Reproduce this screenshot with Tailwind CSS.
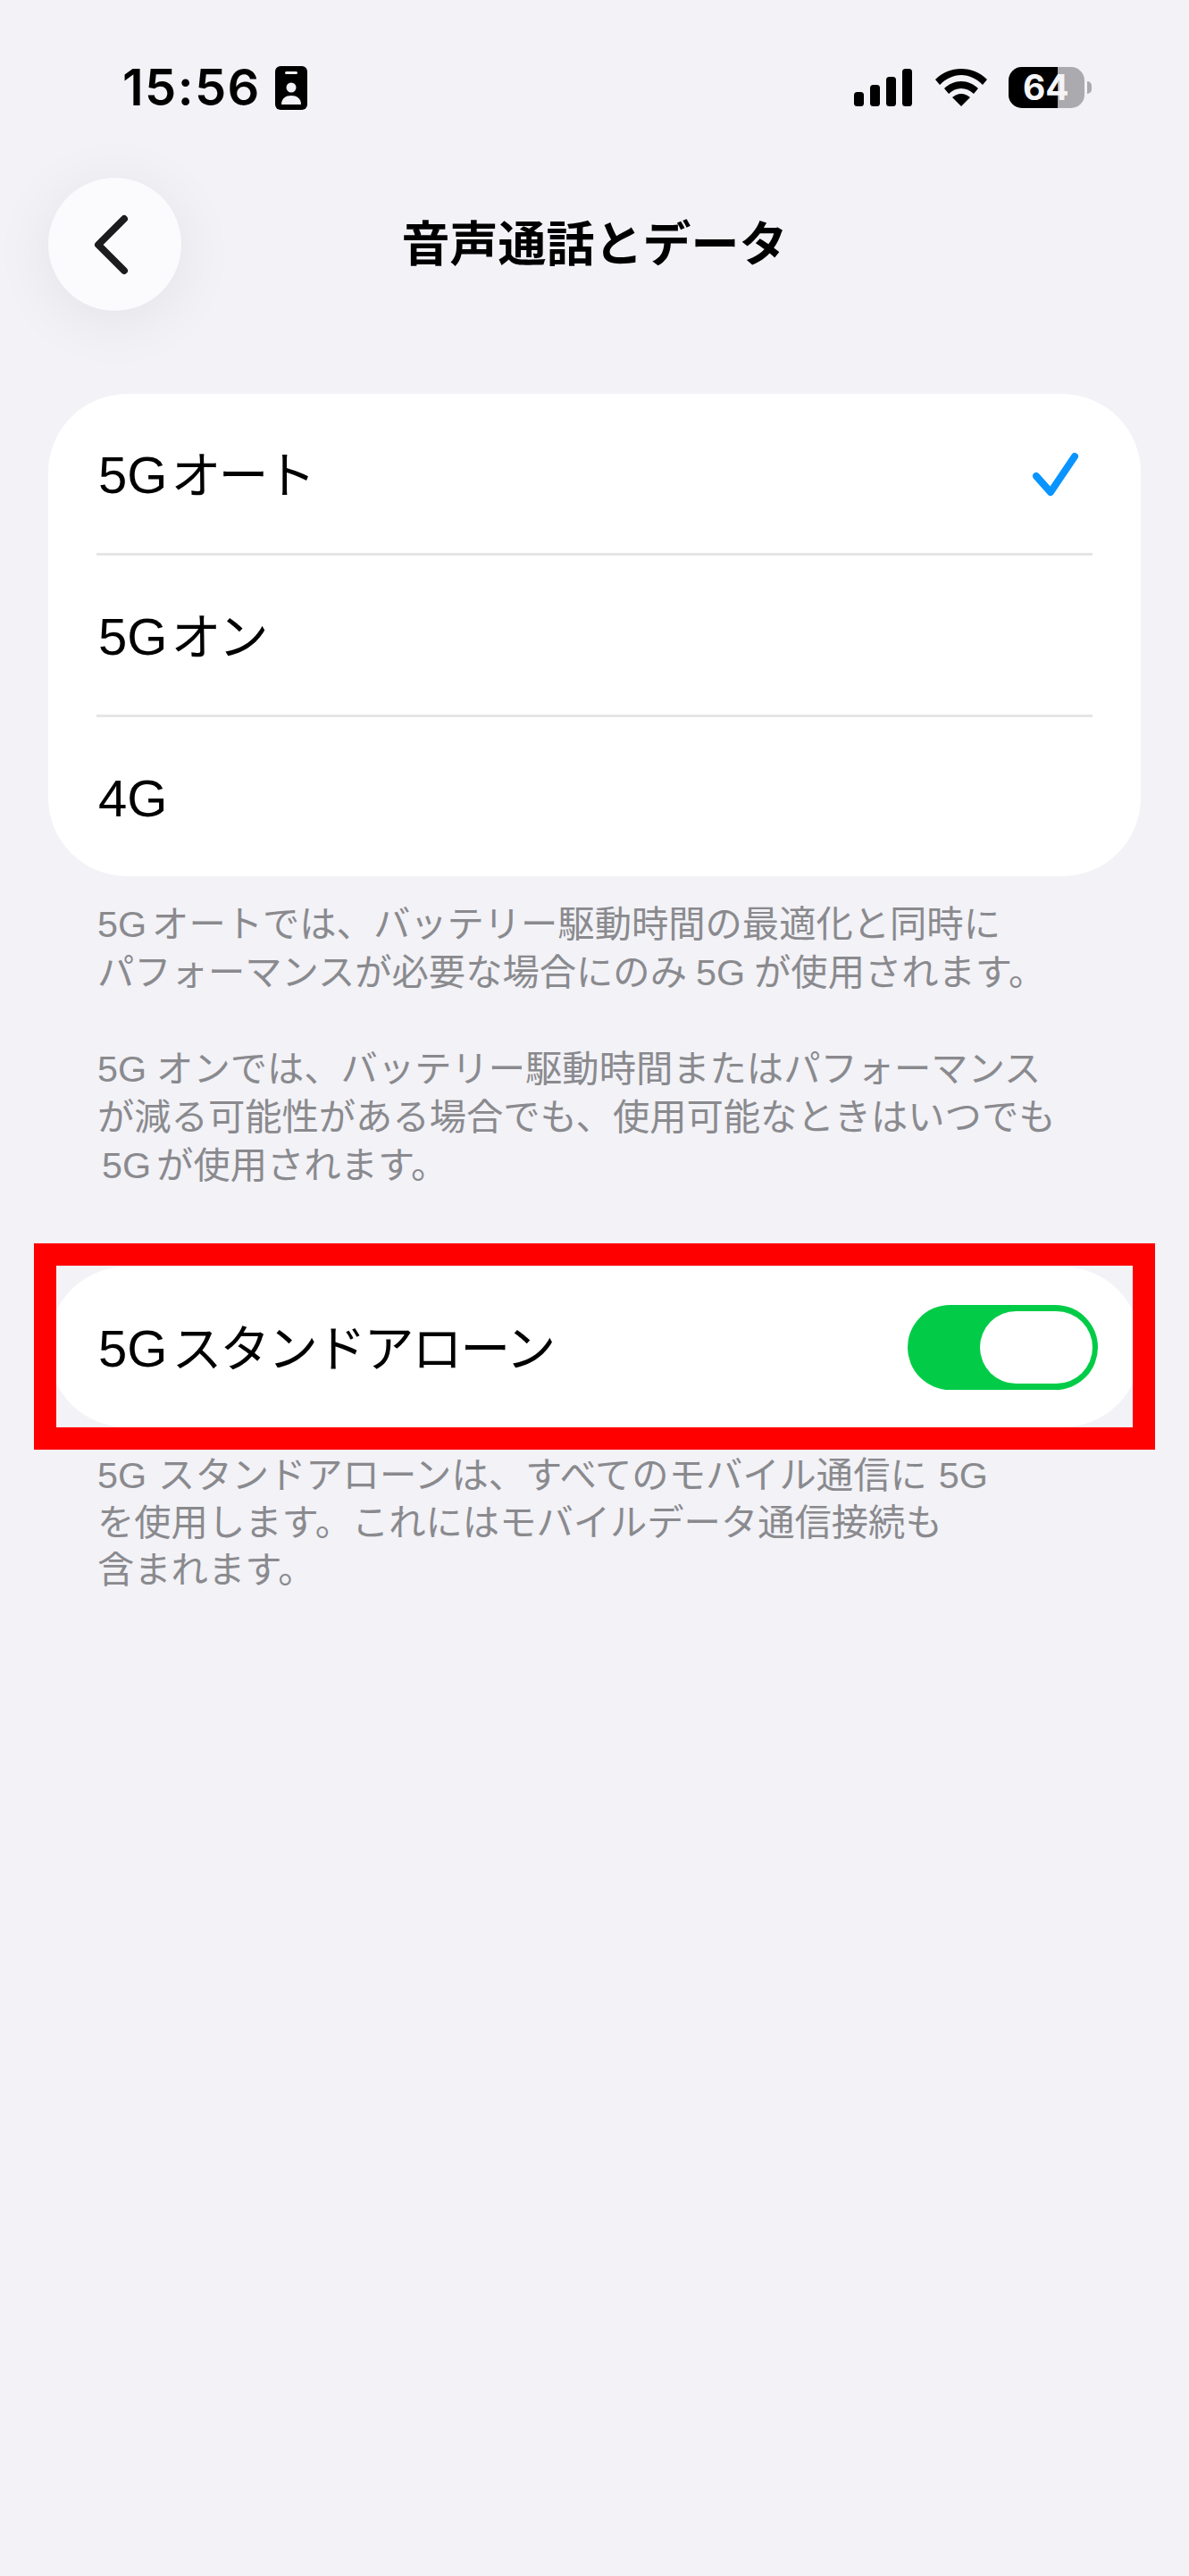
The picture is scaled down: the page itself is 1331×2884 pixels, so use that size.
<!DOCTYPE html>
<html lang="ja">
<head>
    <meta charset="UTF-8" />
    <meta name="viewport" content="width=device-width, initial-scale=1" />
    <title>音声通話とデータ</title>
    <script src="https://cdn.jsdelivr.net/npm/@tailwindcss/browser@4"></script>
</head>
<body class="bg-[#f2f2f7] font-['Liberation_Sans','Noto_Sans_CJK_JP',sans-serif] text-black">
<div class="relative w-[1331px] h-[2884px] overflow-hidden">

    <!-- status bar -->
    <div class="flex items-center justify-between h-[48px] mt-[74px] pl-[137px] pr-[109px]">
        <div class="flex items-center gap-[16px]">
            <span class="font-['Inter'] font-semibold text-[56px] leading-[48px] tracking-[1.4px]">15:56</span>
            <svg class="w-[36px] h-[49px]" viewBox="0 0 36 49">
                <rect width="36" height="49" rx="6" fill="#000"/>
                <rect x="11" y="6" width="14" height="3" rx="1.5" fill="#f2f2f7"/>
                <circle cx="18" cy="24" r="5.5" fill="#f2f2f7"/>
                <path d="M7 43c0-7 5-10 11-10s11 3 11 10z" fill="#f2f2f7"/>
            </svg>
        </div>
        <div class="flex items-center">
            <svg class="w-[66px] h-[42px]" viewBox="0 0 66 42" fill="#000">
                <rect x="0" y="26" width="11" height="16" rx="3.5"/>
                <rect x="18" y="18" width="11" height="24" rx="3.5"/>
                <rect x="36" y="9" width="11" height="33" rx="3.5"/>
                <rect x="54" y="0" width="11" height="42" rx="3.5"/>
            </svg>
            <svg class="w-[58px] h-[42px] ml-[25px]" viewBox="0 0 58 42" fill="#000">
                <path d="M0 12C8 4 18 0 29 0s21 4 29 12l-5 6C46 11 38 7 29 7S12 11 5 18z"/>
                <path d="M10 22c5-5 12-8 19-8s14 3 19 8l-5 6c-4-4-9-6-14-6s-10 2-14 6z"/>
                <path d="M19 32c3-2 6-4 10-4s7 2 10 4L29 42z"/>
            </svg>
            <div class="relative ml-[24px] w-[85px] h-[46px] rounded-[15px] bg-[#aaaaaf] overflow-hidden">
                <div class="absolute left-0 top-0 bottom-0 w-[55px] bg-black"></div>
                <span class="absolute left-[16px] top-0 font-['Inter'] font-bold text-[39px] leading-[46px] text-[#f4f4f6]">64</span>
            </div>
            <div class="ml-[3px] w-[5px] h-[14px] rounded-r-full bg-[#aaaaaf]"></div>
        </div>
    </div>

    <!-- nav -->
    <div class="relative flex items-center justify-center h-[149px] mt-[77px] ml-[54px] w-[1223px]">
        <div class="absolute left-0 top-0 w-[149px] h-[149px] rounded-full bg-[#fbfbfe] shadow-[0_10px_70px_rgba(0,0,0,0.07)] flex items-center justify-center">
            <svg class="w-[50px] h-[76px] -ml-[12px]" viewBox="0 0 50 76" fill="none" stroke="#1c1c1e" stroke-width="8" stroke-linecap="round" stroke-linejoin="round">
                <path d="M41 9 L12 38 L41 67"/>
            </svg>
        </div>
        <h1 class="font-bold text-[54px] leading-[60px]">音声通話とデータ</h1>
    </div>

    <!-- network options -->
    <div class="mx-[54px] mt-[93px] bg-white rounded-[88px] h-[540px] flex flex-col">
        <div class="flex-1 flex items-center justify-between pl-[56px] pr-[67px]">
            <span class="text-[58px] leading-[70px] mt-[4px]">5G<span class="ml-[4px] text-[56px] tracking-[-3px]">オート</span></span>
            <svg class="w-[54px] h-[52px] mt-[2px]" viewBox="0 0 54 52" fill="none" stroke="#0a94ff" stroke-width="8" stroke-linecap="round" stroke-linejoin="round">
                <path d="M4 28 L20 46 L47 6"/>
            </svg>
        </div>
        <div class="h-[3px] mx-[54px] bg-[#e5e5e7]"></div>
        <div class="flex-1 flex items-center pl-[56px]">
            <span class="text-[58px] leading-[70px] mt-[4px]">5G<span class="ml-[4px] text-[56px] tracking-[-3px]">オン</span></span>
        </div>
        <div class="h-[3px] mx-[54px] bg-[#e5e5e7]"></div>
        <div class="flex-1 flex items-center pl-[56px]">
            <span class="text-[58px] leading-[70px] mt-[4px]">4G</span>
        </div>
    </div>

    <div class="ml-[109px] mt-[27px] text-[41.3px] leading-[54px] text-[#8a8a8e] whitespace-nowrap">
        <p>5G<span class="ml-[6px]">オートでは、バッテリー駆動時間の最適化と同時に</span></p>
        <p>パフォーマンスが必要な場合にのみ<span class="mx-[10px]">5G</span>が使用されます。</p>
        <p class="mt-[54px]">5G<span class="ml-[11px]">オンでは、バッテリー駆動時間またはパフォーマンス</span></p>
        <p>が減る可能性がある場合でも、使用可能なときはいつでも</p>
        <p class="ml-[5px]">5G<span class="ml-[6px]">が使用されます。</span></p>
    </div>

    <!-- standalone toggle -->
    <div class="mx-[54px] mt-[86px] bg-white rounded-[88px] h-[180px] flex items-center justify-between pl-[56px] pr-[48px]">
        <span class="text-[58px] leading-[70px] mt-[4px]">5G<span class="ml-[5px] text-[56px] tracking-[-2.2px]">スタンドアローン</span></span>
        <div class="relative w-[213px] h-[95px] rounded-full bg-[#02cc47]">
            <div class="absolute right-[6px] top-[7px] w-[126px] h-[81px] rounded-full bg-white"></div>
        </div>
    </div>

    <div class="ml-[109px] mt-[28px] text-[41.3px] leading-[53px] text-[#8a8a8e] whitespace-nowrap">
        <p>5G<span class="ml-[13px]">スタンドアローンは、すべてのモバイル通信に</span><span class="ml-[13px]">5G</span></p>
        <p>を使用します。これにはモバイルデータ通信接続も</p>
        <p>含まれます。</p>
    </div>

    <!-- red annotation box -->
    <div class="absolute left-[38px] top-[1392px] w-[1255px] h-[231px] border-[25px] border-[#ff0000]"></div>
</div>
</body>
</html>
